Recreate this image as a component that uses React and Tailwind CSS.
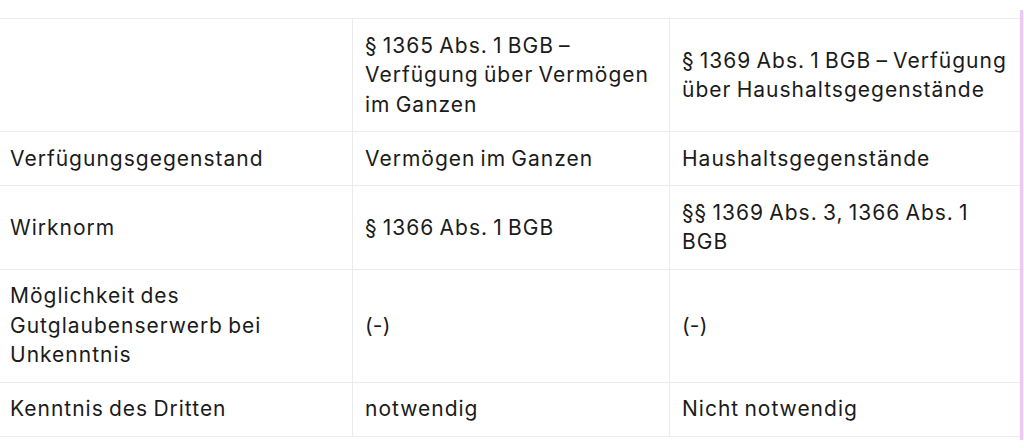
import React from "react";

const rows = [
  {
    cells: [
      null,
      ["§ 1365 Abs. 1 BGB –", "Verfügung über Vermögen", "im Ganzen"],
      ["§ 1369 Abs. 1 BGB – Verfügung", "über Haushaltsgegenstände"],
    ],
  },
  { cells: [["Verfügungsgegenstand"], ["Vermögen im Ganzen"], ["Haushaltsgegenstände"]] },
  { cells: [["Wirknorm"], ["§ 1366 Abs. 1 BGB"], ["§§ 1369 Abs. 3, 1366 Abs. 1", "BGB"]] },
  {
    cells: [
      ["Möglichkeit des", "Gutglaubenserwerb bei", "Unkenntnis"],
      ["(-)"],
      ["(-)"],
    ],
  },
  { cells: [["Kenntnis des Dritten"], ["notwendig"], ["Nicht notwendig"]] },
];

function Cell({ lines, col }) {
  const base = "flex items-center py-[11.75px] whitespace-nowrap";
  const cls =
    col === 0
      ? `${base} pl-[10px] pr-3`
      : col === 1
      ? `${base} pl-[12px] pr-3 border-l border-[#ebebeb]`
      : `${base} pl-[12px] pr-[2px] border-l border-[#ebebeb]`;
  return (
    <div className={cls}>
      <div>
        {lines &&
          lines.map((l, i) => (
            <div key={i} className={l === "(-)" ? "tracking-[0.2px]" : ""}>
              {l}
            </div>
          ))}
      </div>
    </div>
  );
}

export default function App() {
  return (
    <div
      className="w-[1024px] h-[448px] bg-white flex text-[#1b1b1b] overflow-hidden"
      style={{ fontFamily: "Inter, 'Noto Sans', sans-serif" }}
    >
      <div className="w-[1020px] pt-[18px]">
        <div className="border-t border-b border-[#ebebeb] text-[21px] leading-[29.5px] tracking-[1px] [word-spacing:-1.7px]">
          {rows.map((r, ri) => (
            <div
              key={ri}
              className={`grid grid-cols-[352px_317px_351px] ${ri > 0 ? "border-t border-[#ebebeb]" : ""}`}
            >
              {r.cells.map((c, ci) => (
                <Cell key={ci} lines={c} col={ci} />
              ))}
            </div>
          ))}
        </div>
      </div>
      <div className="w-[3px] mt-[10px] h-[430px] bg-[#eec6f8]" />
    </div>
  );
}
